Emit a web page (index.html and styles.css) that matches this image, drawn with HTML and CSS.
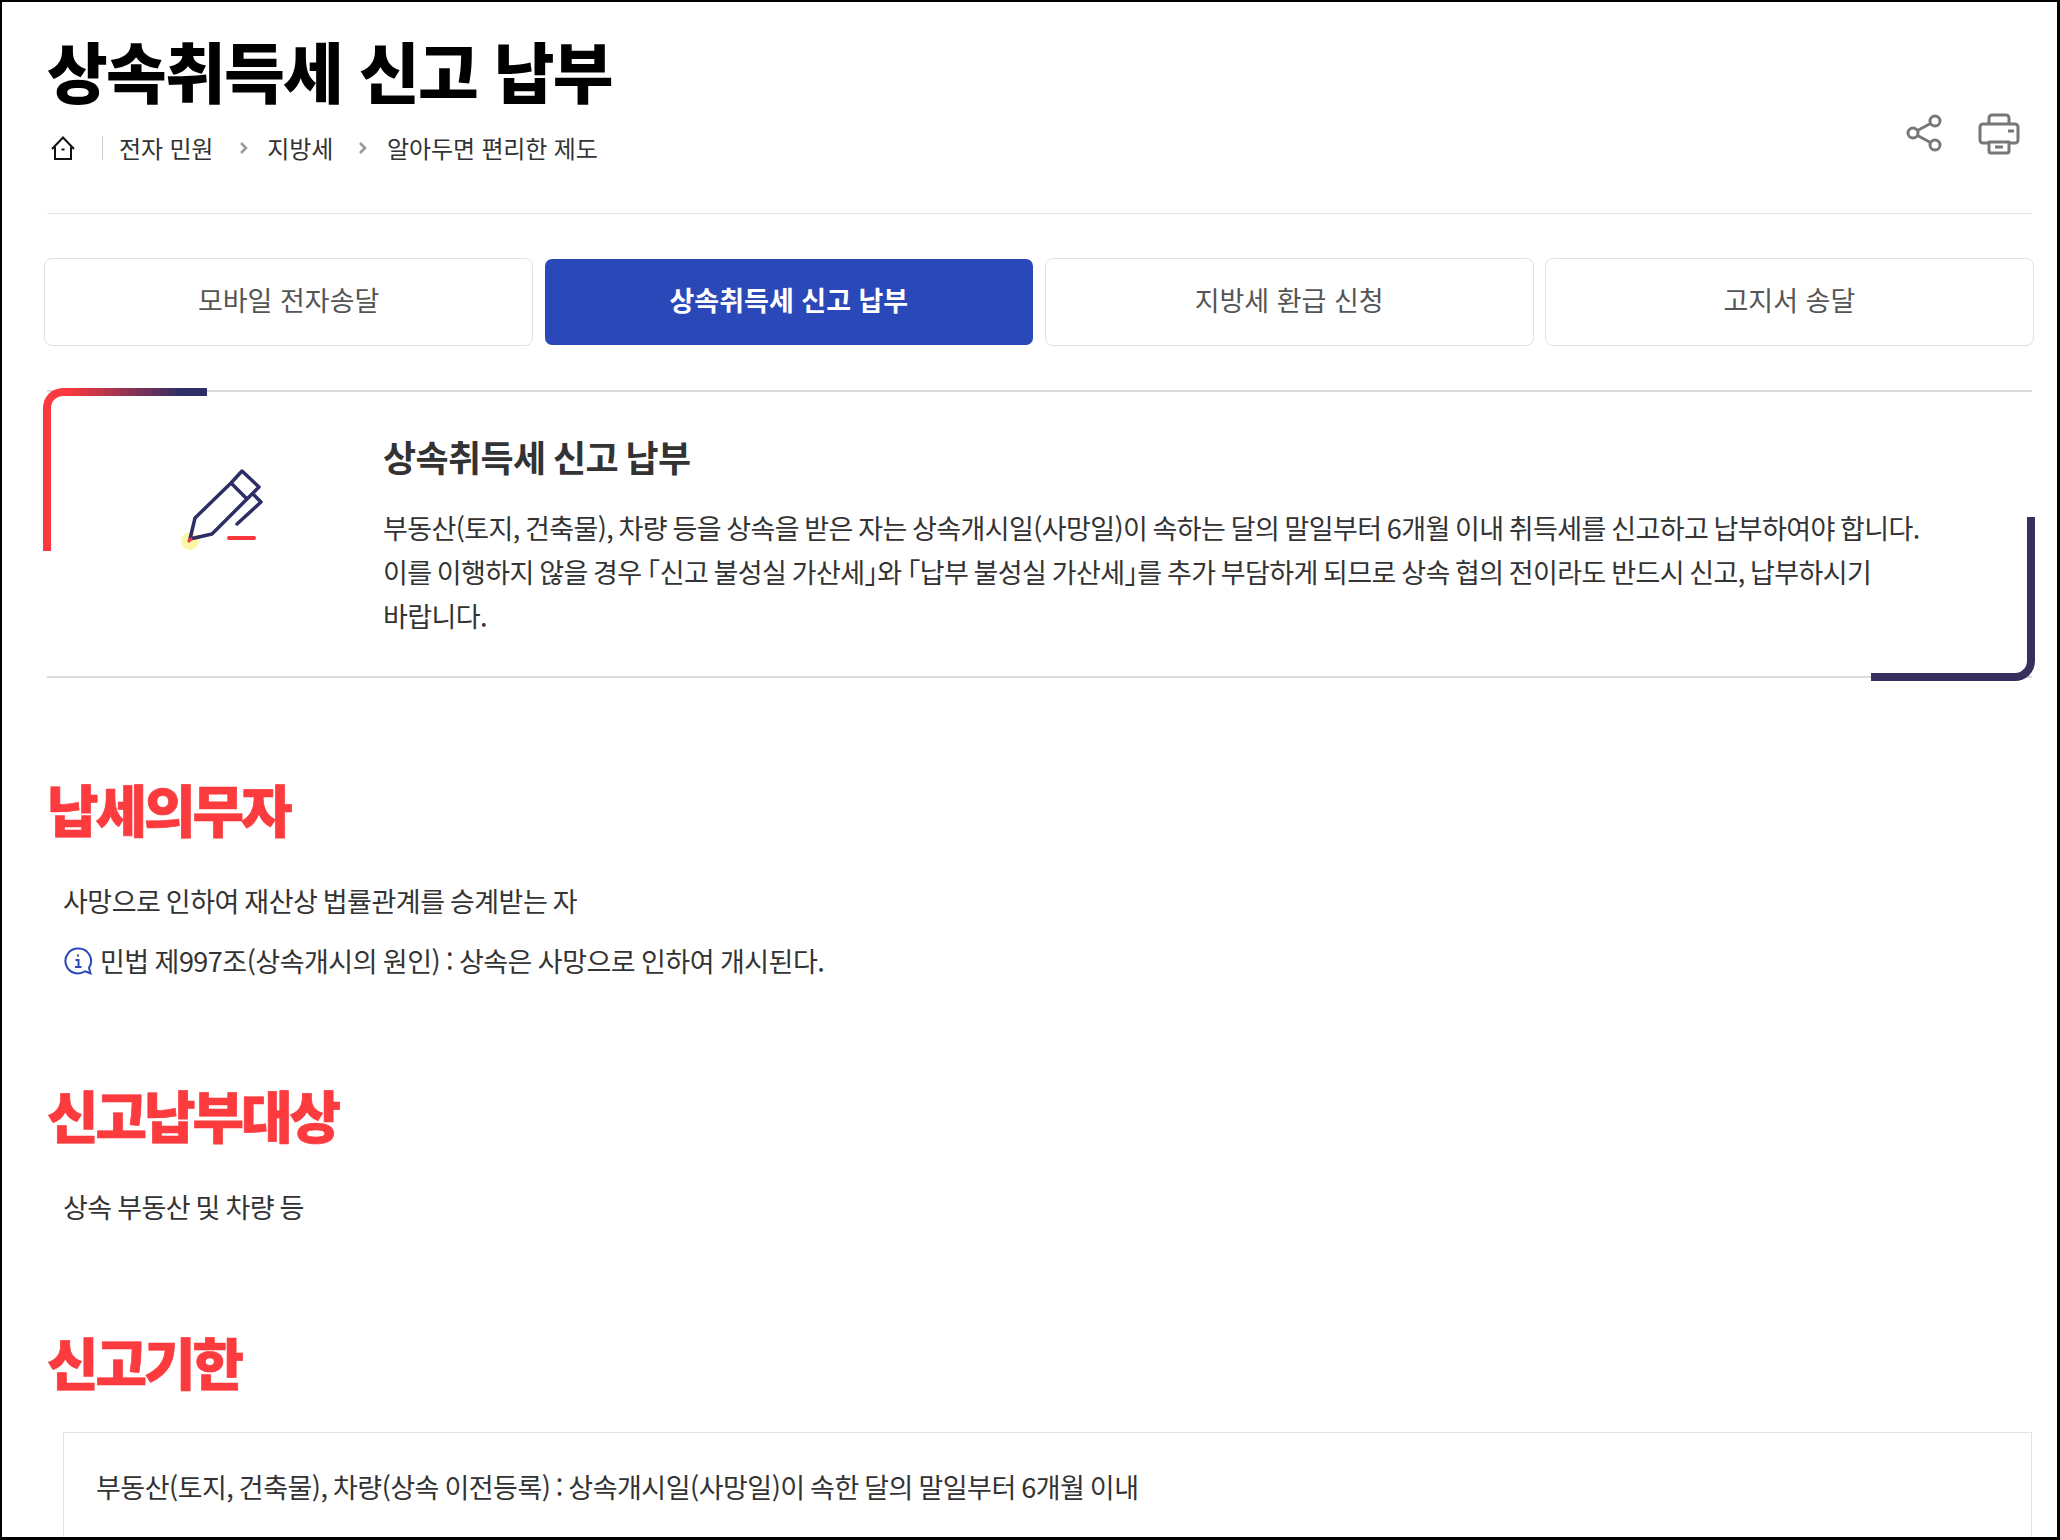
FILE: index.html
```html
<!DOCTYPE html>
<html lang="ko">
<head>
<meta charset="utf-8">
<title>상속취득세 신고 납부</title>
<link rel="stylesheet" href="styles.css">
</head>
<body>
<div class="frame">
  <header class="head">
    <div class="head-left">
      <h1 class="title">상속취득세 신고 납부</h1>
      <nav class="crumbs">
        <svg class="home" viewBox="0 0 24 24" width="24" height="24"><path d="M1 13 12 1.500 23 13M4 11V23H20V11M10.500 13.500h3" fill="none" stroke="#111" stroke-width="2"/></svg>
        <span class="sep"></span>
        <span>전자 민원</span>
        <svg class="chev first" viewBox="0 0 10 14" width="10" height="14"><path d="M2 2l5 5-5 5" fill="none" stroke="#999" stroke-width="2.500"/></svg>
        <span>지방세</span>
        <svg class="chev" viewBox="0 0 10 14" width="10" height="14"><path d="M2 2l5 5-5 5" fill="none" stroke="#999" stroke-width="2.500"/></svg>
        <span>알아두면 편리한 제도</span>
      </nav>
    </div>
    <div class="tools">
      <svg viewBox="0 0 38 40" width="38" height="40"><g fill="none" stroke="#777" stroke-width="3"><circle cx="7" cy="20" r="5"/><circle cx="29" cy="8" r="5"/><circle cx="29" cy="32" r="5"/><path d="M11.500 17.500 24.500 10.500M11.500 22.500 24.500 29.500"/></g></svg>
      <svg viewBox="0 0 42 42" width="42" height="42"><g fill="none" stroke="#777" stroke-width="3" stroke-linejoin="round"><path d="M11 11V5a3 3 0 0 1 3-3h14a3 3 0 0 1 3 3v6"/><path d="M11 30H5a3 3 0 0 1-3-3V14a3 3 0 0 1 3-3h32a3 3 0 0 1 3 3v13a3 3 0 0 1-3 3h-5"/><path d="M11 29h20v9a2 2 0 0 1-2 2H13a2 2 0 0 1-2-2z"/><path d="M30 18h6M17 34h8"/></g></svg>
    </div>
  </header>

  <div class="tabs">
    <a class="tab">모바일 전자송달</a>
    <a class="tab active">상속취득세 신고 납부</a>
    <a class="tab">지방세 환급 신청</a>
    <a class="tab">고지서 송달</a>
  </div>

  <section class="intro">
    <span class="corner-tl"></span>
    <span class="corner-br"></span>
    <div class="intro-icon">
      <svg viewBox="0 0 90 90" width="90" height="90">
        <circle cx="10" cy="76" r="9" fill="#fbf6a8"/>
        <path d="M10 74 15 53 51 18 62 6 79 22 67 34 32 69z M51 18 67 34 M73 29 81 37 57 59" fill="none" stroke="#2e2e66" stroke-width="3.500" stroke-linejoin="round" stroke-linecap="round"/>
        <path d="M8 77 12 73" stroke="#f9373c" stroke-width="3"/>
        <path d="M49 73H74" stroke="#f9373c" stroke-width="4" stroke-linecap="round"/>
      </svg>
    </div>
    <div class="intro-body">
      <h2 class="intro-title">상속취득세 신고 납부</h2>
      <p class="intro-text">부동산(토지, 건축물), 차량 등을 상속을 받은 자는 상속개시일(사망일)이 속하는 달의 말일부터 6개월 이내 취득세를 신고하고 납부하여야 합니다. 이를 이행하지 않을 경우 「신고 불성실 가산세」와 「납부 불성실 가산세」를 추가 부담하게 되므로 상속 협의 전이라도 반드시 신고, 납부하시기 바랍니다.</p>
    </div>
  </section>

  <h2 class="sec-title first">납세의무자</h2>
  <p class="line">사망으로 인하여 재산상 법률관계를 승계받는 자</p>
  <p class="line note">
    <svg viewBox="0 0 30 30" width="30" height="30"><path d="M15 2.500a12.500 12.500 0 1 0 7 22.800l5.500 2-1.500-5.500A12.500 12.500 0 0 0 15 2.500z" fill="none" stroke="#2b48b8" stroke-width="2"/><path d="M15 8.500v2M12.500 14h3v7M12 21h6.500" fill="none" stroke="#2b48b8" stroke-width="2"/></svg>
    <span>민법 제997조(상속개시의 원인) : 상속은 사망으로 인하여 개시된다.</span>
  </p>

  <h2 class="sec-title second">신고납부대상</h2>
  <p class="line">상속 부동산 및 차량 등</p>

  <h2 class="sec-title third">신고기한</h2>
  <div class="box">부동산(토지, 건축물), 차량(상속 이전등록) : 상속개시일(사망일)이 속한 달의 말일부터 6개월 이내</div>
</div>
</body>
</html>
```
FILE: styles.css
```css
* { box-sizing: border-box; }
html, body { margin: 0; padding: 0; background: #fff; }
body {
  font-family: "Noto Sans CJK KR", "Noto Sans", sans-serif;
  color: #333;
}
.frame {
  width: 2060px;
  height: 1540px;
  overflow: hidden;
  border: solid #000;
  border-width: 2px 3px 3px 2px;
  padding: 0 25px 0 45px;
}
.head {
  display: flex;
  justify-content: space-between;
  height: 212px;
  border-bottom: 1px solid #e3e3e3;
  padding-top: 22px;
}
.title {
  margin: 0;
  font-size: 66px;
  line-height: 90px;
  font-weight: 900;
  color: #000;
  letter-spacing: -1.7px;
}
.crumbs {
  display: flex;
  align-items: center;
  margin-top: 16px;
  font-size: 24px;
  line-height: 36px;
  color: #333;
  letter-spacing: -0.15px;
}
.home { margin: 0 27px 0 4px; }
.sep { width: 1px; height: 24px; background: #ccc; margin-right: 16px; }
.chev { margin: 0 19px 0 25px; }
.chev.first { margin: 0 18px 0 26px; }
.tools {
  display: flex;
  gap: 34px;
  padding: 89px 12px 0 0;
}
.tabs {
  display: grid;
  grid-template-columns: repeat(4, 1fr);
  gap: 11px;
  margin: 44px -2px 0 -3px;
}
.tab {
  height: 88px;
  display: flex;
  align-items: center;
  justify-content: center;
  border: 1px solid #e1e1e1;
  border-radius: 8px;
  padding-bottom: 5px;
  font-size: 27px;
  color: #555;
}
.tab.active {
  background: #2b48b8;
  background-clip: padding-box;
  border-color: transparent;
  color: #fff;
  font-weight: 700;
}
.intro {
  position: relative;
  display: flex;
  height: 288px;
  margin-top: 44px;
  border-top: 2px solid #d9d9d9;
  border-bottom: 2px solid #d9d9d9;
}
.corner-tl {
  position: absolute;
  left: -4px;
  top: -4px;
  width: 164px;
  height: 163px;
  border: solid transparent;
  border-width: 8px 0 0 8px;
  border-top-left-radius: 20px;
  background:
    linear-gradient(#fff, #fff) padding-box,
    linear-gradient(90deg, #fa3a3e 15%, #2e2e66 85%) border-box;
}
.corner-br {
  position: absolute;
  right: -3px;
  bottom: -5px;
  width: 164px;
  height: 164px;
  border: solid #36305f;
  border-width: 0 8px 8px 0;
  border-bottom-right-radius: 20px;
}
.intro-icon {
  position: relative;
  flex: 0 0 336px;
  padding: 73px 0 0 133px;
}
.intro-body { position: relative; flex: 1; padding: 38px 92px 0 0; }
.intro-title {
  margin: 0;
  font-size: 36px;
  line-height: 52px;
  font-weight: 700;
  color: #333;
  letter-spacing: -0.6px;
  word-spacing: -2px;
}
.intro-text {
  margin: 24px 0 0;
  font-size: 27px;
  line-height: 44px;
  color: #333;
  letter-spacing: -0.6px;
  word-spacing: -1.6px;
  word-break: keep-all;
  font-feature-settings: "halt";
}
.sec-title {
  margin: 0;
  font-size: 56px;
  line-height: 80px;
  font-weight: 900;
  color: #fb3b3e;
  letter-spacing: -3px;
  -webkit-text-stroke: 0.7px #fb3b3e;
}
.sec-title.first { margin-top: 90px; }
.sec-title.second { margin-top: 91px; }
.sec-title.third { margin-top: 92px; }
.line {
  margin: 31px 0 0 16px;
  font-size: 27px;
  line-height: 44px;
  color: #333;
  letter-spacing: -0.5px;
  word-spacing: -1.6px;
}
.note {
  display: flex;
  align-items: center;
  gap: 7px;
  margin-top: 16px;
  word-spacing: -1.2px;
}
.box {
  margin: 31px 0 0 16px;
  height: 200px;
  padding: 32px 32px;
  border: 1px solid #e3e3e3;
  font-size: 27px;
  line-height: 44px;
  color: #333;
  letter-spacing: -0.5px;
  word-spacing: -1.6px;
}
```
